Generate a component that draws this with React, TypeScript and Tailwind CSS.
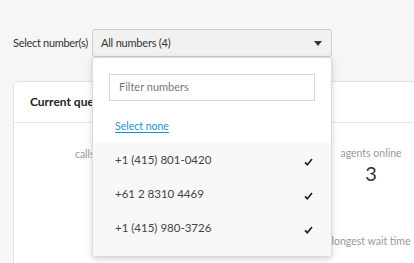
export default function App() {
  const numbers = ['+1 (415) 801-0420', '+61 2 8310 4469', '+1 (415) 980-3726']

  return (
    <div className="relative w-[414px] h-[263px] overflow-hidden bg-[#f6f6f6] font-['Lato',sans-serif] text-[#333]">
      {/* Number picker */}
      <div className="flex items-center pt-[29px] pl-[13px]">
        <span className="text-[11px] tracking-[-0.3px] w-[79px] whitespace-nowrap">Select number(s)</span>
        <div className="relative">
          <div className="flex items-center justify-between w-[240px] h-[28px] pl-[8px] pr-[9px] rounded-[3px] border border-[#cfcfcf] bg-[#f1f1f1] text-[11px] tracking-[-0.2px]">
            <span>All numbers (4)</span>
            <svg width="8" height="5" viewBox="0 0 8 5" className="mt-[1px]">
              <path d="M0 0h8L4 5z" fill="#333" />
            </svg>
          </div>

          {/* Dropdown */}
          <div className="absolute left-0 top-[28px] z-10 w-[240px] bg-white border border-[#dadada] rounded-b-[3px] shadow-[0_2px_6px_rgba(0,0,0,0.18)]">
            <div className="px-[16px] pt-[16px]">
              <div className="h-[27px] w-[206px] border border-[#d6d6d6] flex items-center pl-[9px] text-[11px] text-[#777]">
                Filter numbers
              </div>
              <div className="h-[42px] flex items-center pl-[6px] pt-[9px]">
                <span className="text-[10.5px] text-[#1b8fd3] underline underline-offset-2">Select none</span>
              </div>
            </div>
            <div className="bg-[#f8f8f8] pb-[11px]">
              {numbers.map(n => (
                <div key={n} className="h-[34px] flex items-center justify-between pl-[22px] pr-[18px] text-[11.5px] text-[#444]">
                  <span>{n}</span>
                  <svg width="9" height="8" viewBox="0 0 9 8" className="mt-[4px]">
                    <path d="M1 4.3l2.3 2.4L8 1" fill="none" stroke="#222" strokeWidth="1.7" />
                  </svg>
                </div>
              ))}
            </div>
          </div>
        </div>
      </div>

      {/* Current queue card */}
      <div className="mt-[24px] ml-[13px] w-[478px] rounded-[6px] border border-[#e2e2e2] bg-white">
        <div className="h-[41px] flex items-center pl-[16px] border-b border-[#e6e6e6] text-[12px] font-bold text-[#222]">
          Current queue
        </div>
        <div className="grid grid-cols-2">
          <div className="flex flex-col items-center pt-[24px] h-[80px]">
            <span className="text-[10.5px] text-[#999]">calls waiting in the queue</span>
          </div>
          <div className="flex flex-col items-center pt-[23px] h-[80px]">
            <span className="text-[10.5px] text-[#999]">agents online</span>
            <span className="text-[20px] leading-[24px] text-[#333] -mt-[1px]">3</span>
          </div>
          <div className="flex flex-col items-center pt-[31px] h-[60px]">
            <span className="text-[10.5px] text-[#999]">average wait time</span>
          </div>
          <div className="flex flex-col items-center pt-[31px] h-[60px]">
            <span className="text-[10.5px] text-[#999]">longest wait time</span>
          </div>
          <div className="h-[20px]" />
          <div className="h-[20px] border-l border-[#e6e6e6]" />
        </div>
      </div>
    </div>
  )
}
